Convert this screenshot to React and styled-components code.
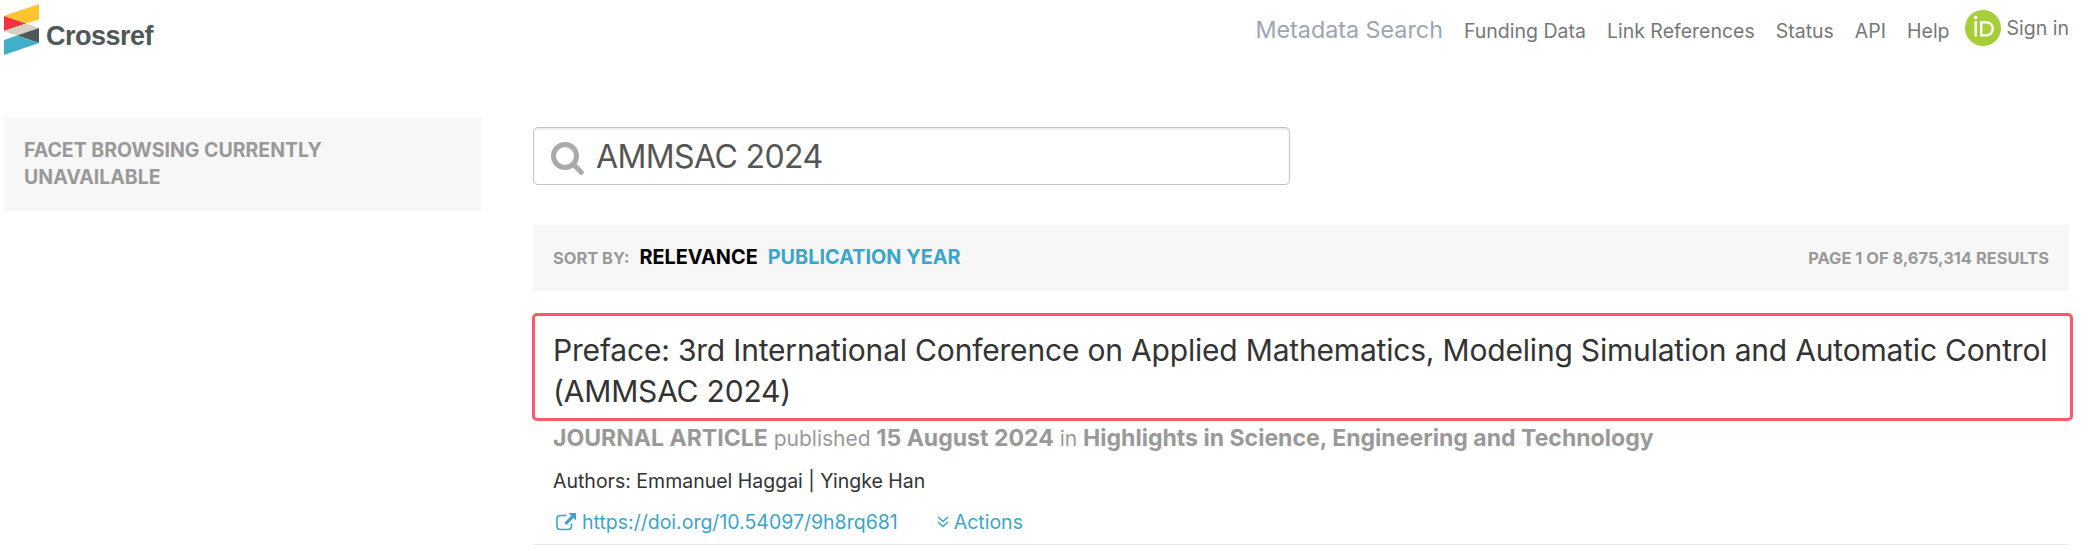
import React, { useState } from 'react'
import styled, { createGlobalStyle } from 'styled-components'

const GlobalStyle = createGlobalStyle`
  * {
    box-sizing: border-box;
  }
  body {
    margin: 0;
    background-color: #fff;
    color: #333;
    font-family: Inter, "Liberation Sans", sans-serif;
    font-size: 20px;
  }
`

const Page = styled.div`
  height: 551px;
  padding: 0 20px 0 4px;
  overflow: hidden;
  white-space: nowrap;
`

const Header = styled.header`
  display: flex;
  justify-content: space-between;
  height: 118px;
`

const Nav = styled.nav`
  display: flex;
  align-items: baseline;
  height: 60px;
  padding-top: 15px;
`

const NavLink = styled.a`
  margin-right: 21px;
  color: #777;
  font-size: ${props => props.$active ? '23.3px' : '19.5px'};
  line-height: 30px;
  ${props => props.$active && 'color: #9da5b0;'}
`

const SignIn = styled.a`
  display: flex;
  align-items: center;
  align-self: flex-start;
  gap: 6px;
  height: 36px;
  margin: -5px 0 0 -6px;
  color: #777;
  font-size: 19.5px;
`

const Columns = styled.div`
  display: flex;
  align-items: flex-start;
  justify-content: space-between;
`

const Facets = styled.aside`
  width: 477px;
  height: 93px;
  padding: 19px 20px;
  background-color: #f7f7f7;
  color: #999;
  font-size: 19.5px;
  font-weight: 700;
  line-height: 27px;
  white-space: normal;
`

const FacetText = styled.div`
  width: 340px;
`

const Main = styled.main`
  width: 1536px;
  padding-top: 9px;
`

const SearchBox = styled.form`
  display: flex;
  align-items: center;
  width: 757px;
  height: 58px;
  padding-left: 17px;
  border: 1px solid #c4c4c4;
  border-radius: 5px;
  box-shadow: inset 0 2px 2px rgba(0, 0, 0, 0.08);
  color: #aaa;

  svg {
    margin-top: 5px;
  }
`

const Input = styled.input`
  flex: 1;
  height: 50px;
  margin-left: 12px;
  padding: 0;
  border: none;
  outline: none;
  background-color: transparent;
  color: #555;
  font-family: inherit;
  font-size: 32px;
  letter-spacing: -0.6px;
`

const SortBar = styled.div`
  display: flex;
  align-items: baseline;
  height: 66px;
  margin-top: 40px;
  padding: 17px 20px 0;
  background-color: #f7f7f7;
  color: #999;
  font-size: 16.45px;
  font-weight: 700;
  line-height: 30px;
`

const SortOption = styled.a`
  margin-left: 10px;
  color: ${props => props.$selected ? '#000' : '#3ba5cb'};
  font-size: 19.85px;
`

const Count = styled.span`
  margin-left: auto;
`

const TitleBox = styled.div`
  width: 1541px;
  height: 108px;
  margin: 22px 0 0 -1px;
  padding: 14px 0 0 18px;
  border: 3px solid #fb5a69;
  border-radius: 5px;
`

const Title = styled.h2`
  margin: 0;
  font-size: 30px;
  font-weight: 400;
  letter-spacing: -0.19px;
  line-height: 40.6px;
`

const Meta = styled.p`
  height: 30px;
  margin: 2px 0 0 20px;
  color: #999;
  font-size: 21px;
  line-height: 30px;

  b {
    font-size: 23.05px;
  }
`

const Authors = styled.p`
  margin: 13px 0 0 20px;
  font-size: 19.5px;
  line-height: 30px;
`

const Links = styled.div`
  display: flex;
  align-items: center;
  height: 43px;
  margin-top: 6px;
  padding: 0 0 2px 23px;
  border-bottom: 1px solid #e9e9e9;
  color: #3ba5cb;
  font-size: 19.5px;
`

const LinkText = styled.a`
  margin: 0 ${props => props.$gap || 0}px 0 5px;
`

const Logo = () => (
  <svg width="156" height="60" viewBox="0 0 156 60">
    <path d="M0 16L35 4V19.500L22 23.500Z" fill="#ffc52e" />
    <path d="M0 16L22 23.500L0 31Z" fill="#ef3341" />
    <path d="M0 31L22 23.500L35 28V28.500L13 35.500L0 31.500Z" fill="#d7d1c5" />
    <path d="M13 35.500L35 28V43Z" fill="#4f5858" />
    <path d="M0 40L13 35.500L35 43L0 55Z" fill="#3eb1c8" />
    <text x="42" y="45.300" fill="#4f5858" fontFamily="Liberation Sans, Arial, sans-serif"
      fontSize="27" fontWeight="700" textLength="107.500">Crossref</text>
  </svg>
)

const SearchIcon = () => (
  <svg width="33" height="33" viewBox="0 0 33 33" fill="none" stroke="currentColor" strokeWidth="5">
    <circle cx="14" cy="14" r="11.500" />
    <path d="M22.500 22.500L30.300 30.300" strokeLinecap="round" />
  </svg>
)

const Orcid = () => (
  <svg width="36" height="36" viewBox="0 0 36 36">
    <circle cx="18" cy="18" r="18" fill="#a6ce39" />
    <circle cx="10.700" cy="7.500" r="1.800" fill="#fff" />
    <path d="M10.700 11V26.500M16.200 12.200H20.500C25 12.200 27.700 15 27.700 18.800S25 25.400 20.500 25.400H16.200Z"
      fill="none" stroke="#fff" strokeWidth="2.400" />
  </svg>
)

const OpenIcon = () => (
  <svg width="21" height="18" viewBox="0 0 21 18">
    <path d="M10.500 2.500H4.500Q1 2.500 1 6V13Q1 16.500 4.500 16.500H12Q15.500 16.500 15.500 13V10.500" fill="none" stroke="currentColor" strokeWidth="1.600" />
    <path d="M12.500 0H20V7.500L17.500 5L10.500 12L8.300 9.800L15.200 2.700Z" fill="currentColor" />
  </svg>
)

const ActionsIcon = () => (
  <svg width="12" height="12" viewBox="0 0 12 12">
    <path d="M1 1L6 5.500L11 1M1 6L6 10.500L11 6" fill="none" stroke="currentColor" strokeWidth="1.500" />
  </svg>
)

const navItems = ['Metadata Search', 'Funding Data', 'Link References', 'Status', 'API', 'Help']

function App() {
  const [input, setInput] = useState('AMMSAC 2024');

  return (
    <Page>
      <GlobalStyle />
      <Header>
        <Logo />
        <Nav>
          {navItems.map((item, i) => (
            <NavLink key={item} $active={i === 0}>{item}</NavLink>
          ))}
          <SignIn>
            <Orcid />
            <span>Sign in</span>
          </SignIn>
        </Nav>
      </Header>

      <Columns>
        <Facets>
          <FacetText>FACET BROWSING CURRENTLY UNAVAILABLE</FacetText>
        </Facets>

        <Main>
          <SearchBox onSubmit={e => e.preventDefault()}>
            <SearchIcon />
            <Input value={input} onChange={e => setInput(e.target.value)} />
          </SearchBox>

          <SortBar>
            <span>SORT BY:</span>
            <SortOption $selected>RELEVANCE</SortOption>
            <SortOption>PUBLICATION YEAR</SortOption>
            <Count>PAGE 1 OF 8,675,314 RESULTS</Count>
          </SortBar>

          <TitleBox>
            <Title>
              Preface: 3rd International Conference on Applied Mathematics, Modeling Simulation and Automatic Control
              <br />
              (AMMSAC 2024)
            </Title>
          </TitleBox>
          <Meta>
            <b>JOURNAL ARTICLE</b> published <b>15 August 2024</b> in <b>Highlights in Science, Engineering and Technology</b>
          </Meta>
          <Authors>Authors: Emmanuel Haggai | Yingke Han</Authors>
          <Links>
            <OpenIcon />
            <LinkText $gap={39}>https://doi.org/10.54097/9h8rq681</LinkText>
            <ActionsIcon />
            <LinkText>Actions</LinkText>
          </Links>
        </Main>
      </Columns>
    </Page>
  )
}

export default App
